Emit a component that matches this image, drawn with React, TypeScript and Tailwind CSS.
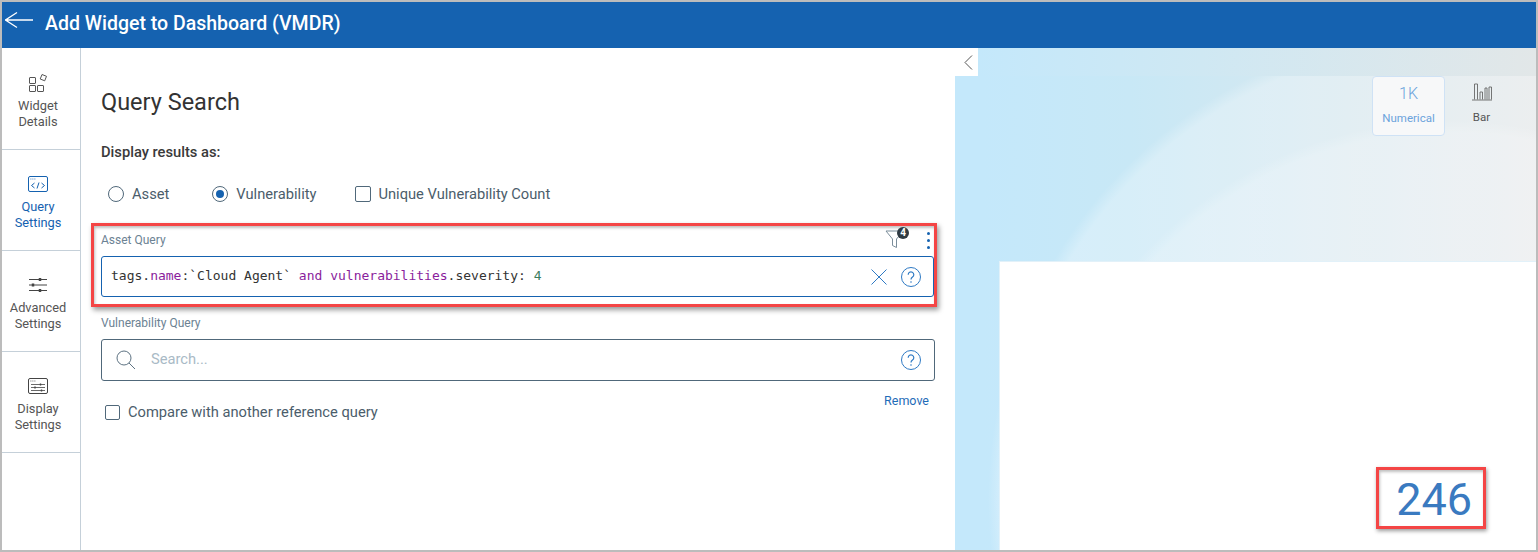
import React from "react";

const navItems = [
  { id: "details", lines: ["Widget", "Details"] },
  { id: "query", lines: ["Query", "Settings"] },
  { id: "advanced", lines: ["Advanced", "Settings"] },
  { id: "display", lines: ["Display", "Settings"] },
];

function NavIcon({ id }: { id: string }) {
  if (id === "details") {
    return (
      <svg width="20" height="20" viewBox="0 0 20 20" fill="none" stroke="#555" strokeWidth="1">
        <rect x="1.5" y="4.5" width="6" height="6" rx="0.5" />
        <rect x="1.5" y="12.5" width="6" height="6" rx="0.5" />
        <rect x="9.5" y="12.5" width="6" height="6" rx="0.5" />
        <path d="M14 1.5l4.5 1.8-1.8 4.5-4.5-1.8z" />
      </svg>
    );
  }
  if (id === "query") {
    return (
      <svg width="20" height="16" viewBox="0 0 20 16" fill="none" stroke="#1562b0" strokeWidth="1">
        <rect x="0.5" y="0.5" width="19" height="15" rx="1.5" />
        <path d="M2.5 3h.8M4.5 3h.8M6.500 3h.8" />
        <path d="M6.5 7L3.5 9.5l3 2.5M13.5 7l3 2.5-3 2.5M11 6.5l-2 6" />
      </svg>
    );
  }
  if (id === "advanced") {
    return (
      <svg width="20" height="16" viewBox="0 0 20 16" fill="none" stroke="#444" strokeWidth="1">
        <path d="M1 2.5h18M1 8h18M1 13.500h18" />
        <path d="M12 1v3M5 6.500v3M12 12v3" strokeWidth="2.500" />
      </svg>
    );
  }
  return (
    <svg width="20" height="16" viewBox="0 0 20 16" fill="none" stroke="#444" strokeWidth="1">
      <rect x="0.5" y="0.5" width="19" height="15" rx="1.5" />
      <path d="M2.500 3h.8M4.500 3h.8M6.500 3h.8" />
      <path d="M3 6.500h14M3 9.500h14M3 12.500h14" strokeWidth="0.800" />
      <path d="M12.500 5.500v2M7 8.500v2M13.500 11.500v2" strokeWidth="1.400" />
    </svg>
  );
}

function HelpIcon() {
  return (
    <svg width="20" height="20" viewBox="0 0 20 20" fill="none" stroke="#2f7ac4" strokeWidth="1">
      <circle cx="10" cy="10" r="9.500" />
      <path d="M7.200 7.800a2.800 2.800 0 1 1 4.300 2.300c-1 .7-1.500 1.200-1.500 2.400" strokeWidth="1.200" />
      <circle cx="10" cy="15" r="0.800" fill="#2f7ac4" stroke="none" />
    </svg>
  );
}

export default function App() {
  return (
    <div className="flex h-[552px] w-[1538px] flex-col overflow-hidden border-2 border-[#bcbcbc] bg-white font-['Roboto',sans-serif] text-[#444]">
      {/* header */}
      <header className="flex h-[46px] shrink-0 items-center gap-[11px] bg-[#1562b0] pl-[3px] text-white">
        <svg className="mb-[10px]" width="29" height="18" viewBox="0 0 29 18" fill="none" stroke="white" strokeWidth="1.300">
          <path d="M0 9h28M12 1.500L.5 9 12 16.500" />
        </svg>
        <h1 className="mb-[3px] text-[19.500px] font-medium">Add Widget to Dashboard (VMDR)</h1>
      </header>

      <div className="flex min-h-0 flex-1">
        {/* left tabs */}
        <nav className="w-[79px] shrink-0 border-r border-[#c5d0d9]">
          {navItems.map((item, i) => (
            <div
              key={item.id}
              className={`flex flex-col items-center border-b border-[#c5d0d9] pr-[6px] text-center text-[12.800px] leading-[16px] ${
                i === 0 ? "h-[102px] pt-[25px]" : "h-[101px] pt-[24px]"
              } ${item.id === "query" ? "text-[#1562b0]" : "text-[#555]"}`}
            >
              <div className="mb-[5px] flex h-[20px] items-center">
                <NavIcon id={item.id} />
              </div>
              {item.lines.map((line) => (
                <span key={line}>{line}</span>
              ))}
            </div>
          ))}
        </nav>

        {/* query form */}
        <main className="w-[874px] shrink-0 px-[20px] pt-[38px]">
          <h2 className="text-[23.500px] leading-[32px] text-[#333]">Query Search</h2>
          <p className="mt-[24px] text-[14.700px] font-medium leading-[20px] text-[#3a3a3a]">Display results as:</p>

          <div className="mt-[22px] flex h-[20px] items-center pl-[7px] text-[14.700px] text-[#4b5d6b]">
            <span className="h-[16px] w-[16px] rounded-full border border-[#50687a]" />
            <span className="ml-[8px]">Asset</span>
            <span className="ml-[43px] flex h-[16px] w-[16px] items-center justify-center rounded-full border border-[#50687a]">
              <span className="h-[8px] w-[8px] rounded-full bg-[#1562b0]" />
            </span>
            <span className="ml-[8px]">Vulnerability</span>
            <span className="ml-[39px] h-[16px] w-[16px] rounded-[2px] border border-[#50687a]" />
            <span className="ml-[7px]">Unique Vulnerability Count</span>
          </div>

          {/* annotated asset query */}
          <section className="mt-[19px] -ml-[10px] -mr-[2px] h-[84px] border-[3px] border-[#f44545] pl-[7px] shadow-[2px_3px_5px_rgba(0,0,0,0.4),inset_1px_2px_3px_rgba(0,0,0,0.25)]">
            <div className="flex h-[30px] items-center justify-between">
              <span className="-mt-[3px] text-[12px] text-[#6c8293]">Asset Query</span>
              <div className="flex items-start pr-[4px]">
                <div className="relative -mt-[5px] mr-[22px]">
                  <svg width="20" height="22" viewBox="0 0 20 22" fill="none" stroke="#7b8d9a" strokeWidth="1">
                    <path d="M1 3h17l-6.500 8v8.500l-4-2V11z" />
                  </svg>
                  <span className="absolute -right-[4px] -top-[1px] flex h-[12px] w-[12px] items-center justify-center rounded-full bg-[#2f3a42] text-[10px] font-bold leading-none text-white">
                    4
                  </span>
                </div>
                <div className="-mt-[1px] flex flex-col gap-[4px]">
                  <span className="h-[3px] w-[3px] rounded-full bg-[#1562b0]" />
                  <span className="h-[3px] w-[3px] rounded-full bg-[#1562b0]" />
                  <span className="h-[3px] w-[3px] rounded-full bg-[#1562b0]" />
                </div>
              </div>
            </div>
            <div className="flex h-[41px] items-center rounded-[3px] border border-[#1562b0] pl-[9px] pr-[12px]">
              <code className="-mt-[2px] flex-1 whitespace-pre font-['DejaVu_Sans_Mono',monospace] text-[13px] text-[#333]">
                tags.<span className="text-[#8a1d9c]">name</span>:`Cloud Agent` <span className="text-[#8a1d9c]">and</span>{" "}
                <span className="text-[#8a1d9c]">vulnerabilities</span>.severity: <span className="text-[#3b7d5e]">4</span>
              </code>
              <svg className="mr-[14px]" width="16" height="16" viewBox="0 0 16 16" fill="none" stroke="#2f7ac4" strokeWidth="1">
                <path d="M.5.500l15 15M15.500.500l-15 15" />
              </svg>
              <HelpIcon />
            </div>
          </section>

          <p className="mt-[8px] text-[12px] leading-[16px] text-[#6c8293]">Vulnerability Query</p>
          <div className="mt-[8px] flex h-[42px] items-center rounded-[3px] border border-[#50687a] pl-[14px] pr-[13px]">
            <svg width="20" height="20" viewBox="0 0 20 20" fill="none" stroke="#5d7282" strokeWidth="1">
              <circle cx="8" cy="8" r="7" />
              <path d="M13 13l6 6" />
            </svg>
            <span className="-mt-[2px] ml-[15px] flex-1 text-[14.700px] text-[#a9bac6]">Search...</span>
            <HelpIcon />
          </div>

          <div className="mt-[10px] flex items-start justify-between pl-[4px] pr-[6px]">
            <label className="mt-[11px] flex items-center gap-[8px] text-[14.700px] leading-[20px] text-[#4b5d6b]">
              <span className="h-[15px] w-[15px] rounded-[2px] border border-[#50687a]" />
              Compare with another reference query
            </label>
            <a className="text-[12.500px] leading-[20px] text-[#1f6cb8]">Remove</a>
          </div>
        </main>

        {/* preview */}
        <aside className="flex min-w-0 flex-1 flex-col bg-[#c4e8fb]">
          <div className="flex h-[28px] shrink-0">
            <div className="flex w-[23px] items-center justify-center bg-white pl-[4px]">
              <svg width="9" height="15" viewBox="0 0 9 15" fill="none" stroke="#555" strokeWidth="1">
                <path d="M8 .500L1 7.500l7 7" />
              </svg>
            </div>
            <div className="flex-1 bg-[linear-gradient(90deg,#c4e8fb_0%,#cfe8f3_40%,#e2e7e8_100%)]" />
          </div>
          <div className="flex min-h-0 flex-1 flex-col bg-[radial-gradient(circle_420px_at_495px_464px,rgba(255,255,255,0.2)_97%,transparent_100%),radial-gradient(circle_472px_at_505px_424px,rgba(255,255,255,0.28)_97%,transparent_100%),linear-gradient(90deg,#c4e8fb_5%,#c8e8f6_30%,#e4e8e9_100%)]">
            <div className="flex h-[185px] shrink-0 justify-end pr-[18px]">
              <div className="flex h-[60px] w-[73px] flex-col items-center rounded-[4px] border border-[#cfe2f5] bg-[#f7f8f9] pt-[7px] text-[#6ba3dc]">
                <span className="text-[16px] font-light leading-[20px]">1K</span>
                <span className="mt-[6px] text-[11.500px] leading-[16px]">Numerical</span>
              </div>
              <div className="flex h-[60px] w-[73px] flex-col items-center pt-[7px] text-[#555]">
                <svg width="20" height="18" viewBox="0 0 20 18" fill="none" stroke="#666" strokeWidth="0.900">
                  <path d="M0 17h20M2.500 16.500V1h3v15.500M8 16.500V9h2.500v7.500M13 16.500V5h2v11.500M17 16.500V4h2.500v12.500" />
                </svg>
                <span className="mt-[8px] text-[11.500px] leading-[16px]">Bar</span>
              </div>
            </div>
            <div className="ml-[44px] flex flex-1 items-end justify-end border-l border-t border-[#e2f1f9] bg-white pb-[21px] pr-[50px]">
              <div className="flex h-[62px] w-[110px] items-center justify-end border-[3px] border-[#f44545] pr-[11px] pt-[3px] text-[45px] text-[#3a7ac0] shadow-[1px_2px_4px_rgba(0,0,0,0.4),inset_1px_2px_3px_rgba(0,0,0,0.25)]">
                246
              </div>
            </div>
          </div>
        </aside>
      </div>
    </div>
  );
}
